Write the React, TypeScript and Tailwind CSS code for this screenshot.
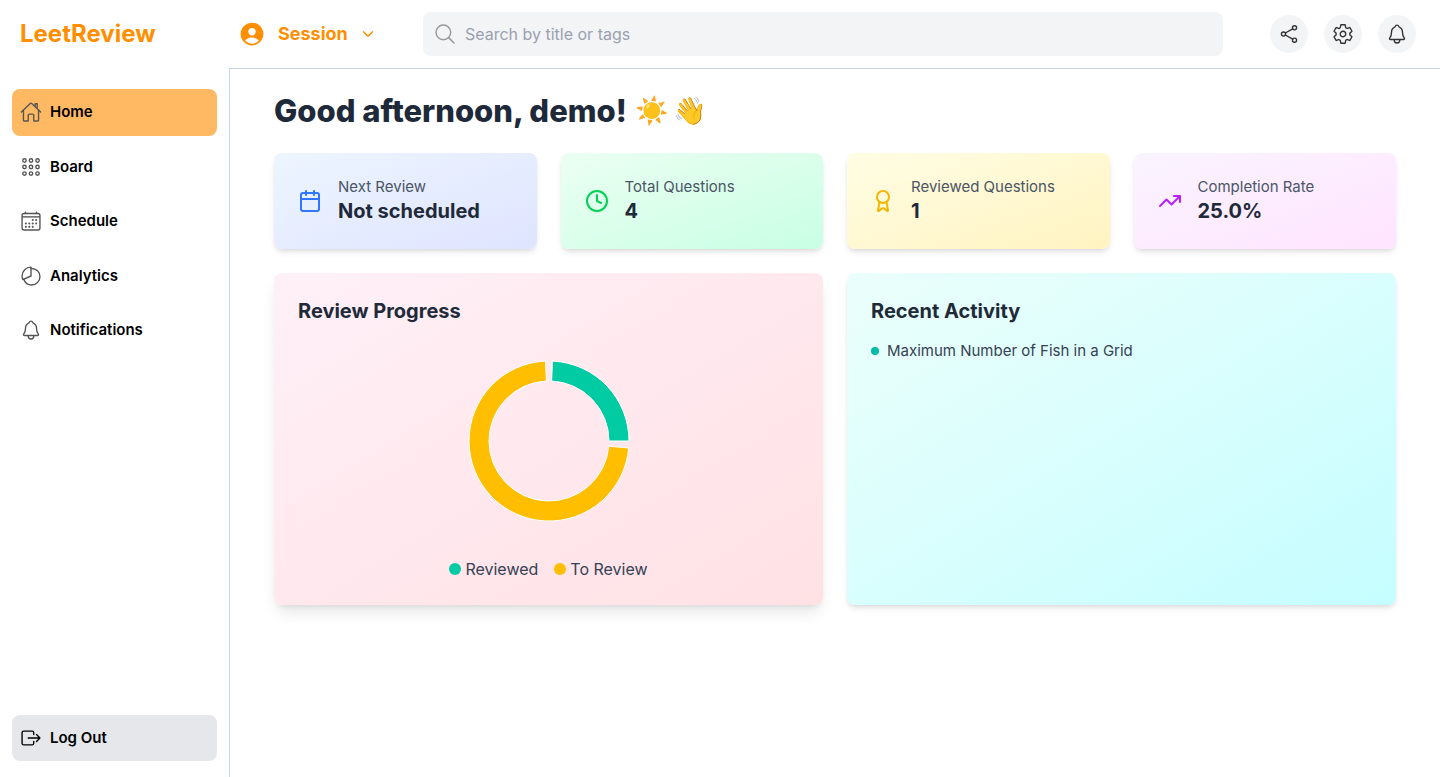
import React from "react";
import {
  IoAppsOutline,
  IoCalendarOutline,
  IoChevronDownOutline,
  IoExitOutline,
  IoHomeOutline,
  IoNotificationsOutline,
  IoPersonCircle,
  IoPieChartOutline,
  IoSearchOutline,
  IoSettingsOutline,
  IoShareSocialOutline,
} from "react-icons/io5";
import { Award, Calendar, Clock, TrendingUp } from "lucide-react";

const navItems = [
  { label: "Home", Icon: IoHomeOutline, active: true },
  { label: "Board", Icon: IoAppsOutline, active: false },
  { label: "Schedule", Icon: IoCalendarOutline, active: false },
  { label: "Analytics", Icon: IoPieChartOutline, active: false },
  { label: "Notifications", Icon: IoNotificationsOutline, active: false },
];

const actions = [
  { label: "Share", Icon: IoShareSocialOutline },
  { label: "Settings", Icon: IoSettingsOutline },
  { label: "Notifications", Icon: IoNotificationsOutline },
];

const stats = [
  { label: "Next Review", value: "Not scheduled", Icon: Calendar, card: "from-[#edf5ff] to-[#dfe4ff]", icon: "text-[#3076ff]" },
  { label: "Total Questions", value: "4", Icon: Clock, card: "from-[#ebfff2] to-[#c8ffe4]", icon: "text-[#00d255]" },
  { label: "Reviewed Questions", value: "1", Icon: Award, card: "from-[#fffde4] to-[#fff3c0]", icon: "text-[#f7b500]" },
  { label: "Completion Rate", value: "25.0%", Icon: TrendingUp, card: "from-[#faf4ff] to-[#ffe4ff]", icon: "text-[#b821ff]" },
];

const slices = [
  { label: "Reviewed", color: "#00cba2", start: 0, end: 87.5 },
  { label: "To Review", color: "#ffbf00", start: 92.5, end: 355 },
];

function point(radius: number, degrees: number) {
  const a = (degrees * Math.PI) / 180;
  return `${(100 + radius * Math.cos(a)).toFixed(3)} ${(100 - radius * Math.sin(a)).toFixed(3)}`;
}

function slicePath(start: number, end: number) {
  const large = end - start > 180 ? 1 : 0;
  return `M${point(80, start)}A80 80 0 ${large} 0 ${point(80, end)}L${point(60, end)}A60 60 0 ${large} 1 ${point(60, start)}Z`;
}

function Sidebar() {
  return (
    <aside className="flex w-[230px] shrink-0 flex-col">
      <div className="flex h-[68px] items-center pl-5">
        <a href="#" className="text-2xl font-bold text-[#ff8f00]">LeetReview</a>
      </div>
      <div className="flex flex-1 flex-col justify-between border-r border-[#c8d6e5] pt-[21px] pr-3 pb-4 pl-3">
        <nav className="flex flex-col gap-2">
          {navItems.map(({ label, Icon, active }) => (
            <a
              key={label}
              href="#"
              className={`flex items-center gap-2 rounded-lg px-2 py-3 text-[15px] leading-normal font-semibold text-black ${active ? "bg-[#ffb963]" : ""}`}
            >
              <Icon className="size-[22px] text-[#555]" />
              {label}
            </a>
          ))}
        </nav>
        <button type="button" className="flex items-center gap-2 rounded-lg bg-gray-200 px-2 py-3 text-[15px] leading-normal font-semibold text-black">
          <IoExitOutline className="size-[22px]" />
          Log Out
        </button>
      </div>
    </aside>
  );
}

function Header() {
  return (
    <header className="flex h-[69px] items-center justify-between gap-6 border-b border-[#c8d6e5] pr-6 pl-2">
      <button type="button" className="flex items-center text-[#ff8f00]">
        <IoPersonCircle className="size-7" />
        <span className="ml-3 text-lg font-bold">Session</span>
        <IoChevronDownOutline className="ml-3 size-4" />
      </button>
      <label className="flex h-11 max-w-[800px] flex-1 items-center gap-2 rounded-lg bg-gray-100 px-2.5">
        <IoSearchOutline className="size-6 text-[#999]" />
        <input
          type="search"
          aria-label="Search by title or tags"
          placeholder="Search by title or tags"
          className="h-8 min-w-0 flex-1 bg-transparent text-base outline-none placeholder:text-gray-400"
        />
      </label>
      <div className="flex gap-4">
        {actions.map(({ label, Icon }) => (
          <button key={label} type="button" aria-label={label} className="flex size-[38px] items-center justify-center rounded-full bg-gray-100 text-[#333]">
            <Icon className="size-[22px]" />
          </button>
        ))}
      </div>
    </header>
  );
}

function ReviewProgress() {
  return (
    <section className="rounded-lg bg-linear-to-br from-[#fff0f8] to-[#ffe1e4] p-6 shadow-lg">
      <h2 className="mb-4 text-xl font-bold">Review Progress</h2>
      <svg viewBox="0 0 200 200" className="mx-auto size-[200px]" role="img" aria-label="Reviewed and remaining questions">
        {slices.map((s) => (
          <path key={s.label} d={slicePath(s.start, s.end)} fill={s.color} stroke="#fff" />
        ))}
      </svg>
      <ul className="mt-4 flex justify-center gap-4 text-base text-gray-700">
        <li className="flex items-center gap-1">
          <span className="size-3 rounded-full bg-[#00cba2]" />
          Reviewed
        </li>
        <li className="flex items-center gap-1">
          <span className="size-3 rounded-full bg-[#ffbf00]" />
          To Review
        </li>
      </ul>
    </section>
  );
}

export default function App() {
  return (
    <div className="flex min-h-screen bg-white font-['Inter',sans-serif] text-gray-800">
      <Sidebar />
      <div className="flex min-w-0 flex-1 flex-col">
        <Header />
        <main className="px-11 pt-6">
          <h1 className="mb-6 flex items-center gap-2 text-[31px] leading-9 font-extrabold">
            Good afternoon, demo!
            <span className="flex gap-1 text-[27px]">
              <span>☀️</span>
              <span>👋</span>
            </span>
          </h1>
          <div className="grid grid-cols-4 gap-6">
            {stats.map(({ label, value, Icon, card, icon }) => (
              <section key={label} className={`flex items-center gap-4 rounded-lg bg-linear-to-br p-6 shadow-md ${card}`}>
                <Icon className={`size-6 ${icon}`} />
                <div>
                  <p className="text-[15px] leading-5 text-gray-600">{label}</p>
                  <p className="text-xl font-bold">{value}</p>
                </div>
              </section>
            ))}
          </div>
          <div className="mt-6 grid grid-cols-2 gap-6">
            <ReviewProgress />
            <section className="rounded-lg bg-linear-to-br from-[#ebfffb] to-[#c5fdff] p-6 shadow-md">
              <h2 className="mb-4 text-xl font-bold">Recent Activity</h2>
              <ul className="text-[15px] leading-5 text-gray-700">
                <li className="flex items-center gap-2">
                  <span className="size-2 rounded-full bg-teal-500" />
                  Maximum Number of Fish in a Grid
                </li>
              </ul>
            </section>
          </div>
        </main>
      </div>
    </div>
  );
}
